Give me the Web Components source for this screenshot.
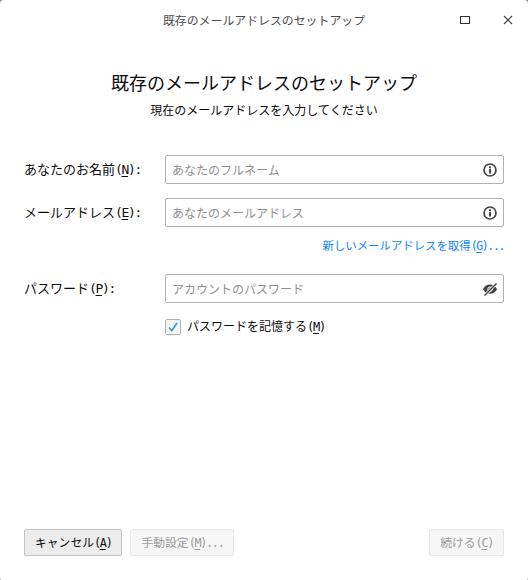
<!DOCTYPE html>
<html lang="ja">
<head>
<meta charset="utf-8">
<title>既存のメールアドレスのセットアップ</title>
<style>
  html, body { margin: 0; height: 100%; background: #8f8f8f; }
  body {
    font: 13px/1.3 "Noto Sans CJK JP", "Noto Sans", sans-serif;
    color: #0c0c0d;
  }
</style>
</head>
<body>
<setup-window>
  <title-bar slot="bar">既存のメールアドレスのセットアップ</title-bar>

  <setup-heading>
    <span slot="title">既存のメールアドレスのセットアップ</span>
    <span slot="sub">現在のメールアドレスを入力してください</span>
  </setup-heading>

  <form-row>
    <span slot="label">あなたのお名前<mono-text>(<u>N</u>):</mono-text></span>
    <text-field icon="info">あなたのフルネーム</text-field>
  </form-row>
  <form-row class="tight">
    <span slot="label">メールアドレス<mono-text>(<u>E</u>):</mono-text></span>
    <text-field icon="info">あなたのメールアドレス</text-field>
  </form-row>
  <link-row>新しいメールアドレスを取得<mono-text>(<u>G</u>)...</mono-text></link-row>
  <form-row class="password">
    <span slot="label">パスワード<mono-text>(<u>P</u>):</mono-text></span>
    <text-field icon="eye">アカウントのパスワード</text-field>
  </form-row>
  <check-row>パスワードを記憶する<mono-text>(<u>M</u>)</mono-text></check-row>

  <action-button slot="left"><span>キャンセル<mono-text>(<u>A</u>)</mono-text></span></action-button>
  <action-button slot="left" disabled><span>手動設定<mono-text>(<u>M</u>)...</mono-text></span></action-button>
  <action-button slot="right" disabled><span>続ける<mono-text>(<u>C</u>)</mono-text></span></action-button>
</setup-window>

<script>
class SetupWindow extends HTMLElement {
  constructor() {
    super()
    this.attachShadow({ mode: 'open' })
    this.shadowRoot.innerHTML = `
      <style>
        :host {
          display: flex;
          flex-direction: column;
          box-sizing: border-box;
          height: 580px;
          background: #fff;
          border-radius: 4px 4px 2px 2px;
        }
        .content { flex: 1; padding: 0 24px; }
        footer {
          display: flex;
          justify-content: space-between;
          padding: 0 24px 24px;
        }
        .side { display: flex; gap: 8px; }
      </style>
      <slot name="bar"></slot>
      <div class="content"><slot></slot></div>
      <footer>
        <div class="side"><slot name="left"></slot></div>
        <div class="side"><slot name="right"></slot></div>
      </footer>
    `
  }
}

class TitleBar extends HTMLElement {
  constructor() {
    super()
    this.attachShadow({ mode: 'open' })
    this.shadowRoot.innerHTML = `
      <style>
        :host {
          display: block;
          position: relative;
          height: 40px;
          line-height: 40px;
          text-align: center;
          font-size: 11.9px;
          color: #4a4a4a;
        }
        .buttons {
          position: absolute;
          top: 0;
          right: 0;
          height: 40px;
          display: flex;
          align-items: center;
        }
        svg { display: block; }
        .max { margin-right: 31px; }
        .close { margin-right: 14px; }
      </style>
      <slot></slot>
      <div class="buttons">
        <svg class="max" width="11" height="8" viewBox="0 0 11 8">
          <rect x=".5" y=".5" width="9" height="7" fill="none" stroke="#2e2e2e"/>
        </svg>
        <svg class="close" width="12" height="12" viewBox="0 0 12 12">
          <path d="M2 2l8 8M10 2l-8 8" fill="none" stroke="#3a3a3a" stroke-width="1.1"/>
        </svg>
      </div>
    `
  }
}

class SetupHeading extends HTMLElement {
  constructor() {
    super()
    this.attachShadow({ mode: 'open' })
    this.shadowRoot.innerHTML = `
      <style>
        :host { display: block; text-align: center; padding-top: 29px; margin-bottom: 36px; }
        .title { font-size: 18px; line-height: 26px; }
        .sub { font-size: 12px; line-height: 18px; margin-top: 6px; }
      </style>
      <div class="title"><slot name="title"></slot></div>
      <div class="sub"><slot name="sub"></slot></div>
    `
  }
}

// no whitespace around the slot here, it would render as a space inside the label
class MonoText extends HTMLElement {
  constructor() {
    super()
    this.attachShadow({ mode: 'open' })
    this.shadowRoot.innerHTML = `<style>
        :host {
          font-family: "DejaVu Sans Mono", "Liberation Mono", monospace;
          letter-spacing: -1.3px;
          text-underline-offset: 2px;
        }
      </style><slot></slot>`
  }
}

class FormRow extends HTMLElement {
  constructor() {
    super()
    this.attachShadow({ mode: 'open' })
    this.shadowRoot.innerHTML = `
      <style>
        :host {
          display: grid;
          grid-template-columns: 141px 339px;
          align-items: center;
          margin-bottom: 14px;
        }
        :host(.tight) { margin-bottom: 9px; }
        :host(.password) { margin-top: 19px; margin-bottom: 15px; }
        .label { white-space: nowrap; }
      </style>
      <div class="label"><slot name="label"></slot></div>
      <slot></slot>
    `
  }
}

class TextField extends HTMLElement {
  constructor() {
    super()
    const icons = {
      info: `<svg width="16" height="16" viewBox="0 0 16 16">
          <circle cx="8" cy="8" r="6" fill="none" stroke="#444" stroke-width="1.7"/>
          <rect x="7" y="7" width="2" height="4.5" fill="#444"/>
          <rect x="7" y="4.300" width="2" height="2" fill="#444"/>
        </svg>`,
      eye: `<svg width="16" height="16" viewBox="0 0 16 16">
          <path d="M1 8.200C2.600 5 5 3.600 8 3.600s5.400 1.400 7 4.600c-1.600 3.200-4 4.600-7 4.600S2.600 11.400 1 8.200z" fill="#444"/>
          <circle cx="8" cy="8.200" r="2.200" fill="none" stroke="#fff" stroke-width="1"/>
          <path d="M2.500 14.500L14.500 2.500" stroke="#fff" stroke-width="2.800"/>
          <path d="M2.500 14.500L14.500 2.500" stroke="#444" stroke-width="1.500"/>
        </svg>`
    }
    this.attachShadow({ mode: 'open' })
    this.shadowRoot.innerHTML = `
      <style>
        :host {
          display: flex;
          align-items: center;
          justify-content: space-between;
          box-sizing: border-box;
          height: 29px;
          padding: 0 5px 0 6px;
          background: #fff;
          border: 1px solid #b1b1b3;
          border-radius: 2px;
          font-size: 12px;
          color: #8f8f90;
        }
        svg { display: block; }
      </style>
      <slot></slot>
      ${icons[this.getAttribute('icon')] || ''}
    `
  }
}

class LinkRow extends HTMLElement {
  constructor() {
    super()
    this.attachShadow({ mode: 'open' })
    this.shadowRoot.innerHTML = `
      <style>
        :host {
          display: block;
          text-align: right;
          font-size: 11.4px;
          line-height: 18px;
          color: #0a84ff;
        }
      </style><slot></slot>`
  }
}

class CheckRow extends HTMLElement {
  constructor() {
    super()
    this.attachShadow({ mode: 'open' })
    this.shadowRoot.innerHTML = `
      <style>
        :host {
          display: flex;
          align-items: center;
          gap: 6px;
          margin-left: 141px;
          font-size: 12px;
        }
        .box {
          box-sizing: border-box;
          width: 16px;
          height: 16px;
          border: 1px solid #b1b1b3;
          border-radius: 2px;
          background: #f5f5f5;
        }
        svg { display: block; }
      </style>
      <div class="box">
        <svg width="14" height="14" viewBox="0 0 14 14">
          <path d="M3 7.500l2.800 3.200L11 3" fill="none" stroke="#2d9bf0" stroke-width="1.700"/>
        </svg>
      </div>
      <span><slot></slot></span>
    `
  }
}

class ActionButton extends HTMLElement {
  constructor() {
    super()
    this.attachShadow({ mode: 'open' })
    this.shadowRoot.innerHTML = `
      <style>
        :host {
          display: flex;
          align-items: center;
          box-sizing: border-box;
          height: 27px;
          padding: 0 10px;
          background: #ececec;
          border: 1px solid #c3c3c3;
          border-radius: 2px;
          font-size: 11.8px;
          white-space: nowrap;
        }
        :host([disabled]) {
          background: #f6f6f6;
          border-color: #e8e8e8;
          color: #9b9b9b;
        }
      </style>
      <slot></slot>
    `
  }
}

customElements.define('setup-window', SetupWindow)
customElements.define('title-bar', TitleBar)
customElements.define('setup-heading', SetupHeading)
customElements.define('mono-text', MonoText)
customElements.define('form-row', FormRow)
customElements.define('text-field', TextField)
customElements.define('link-row', LinkRow)
customElements.define('check-row', CheckRow)
customElements.define('action-button', ActionButton)
</script>
</body>
</html>
